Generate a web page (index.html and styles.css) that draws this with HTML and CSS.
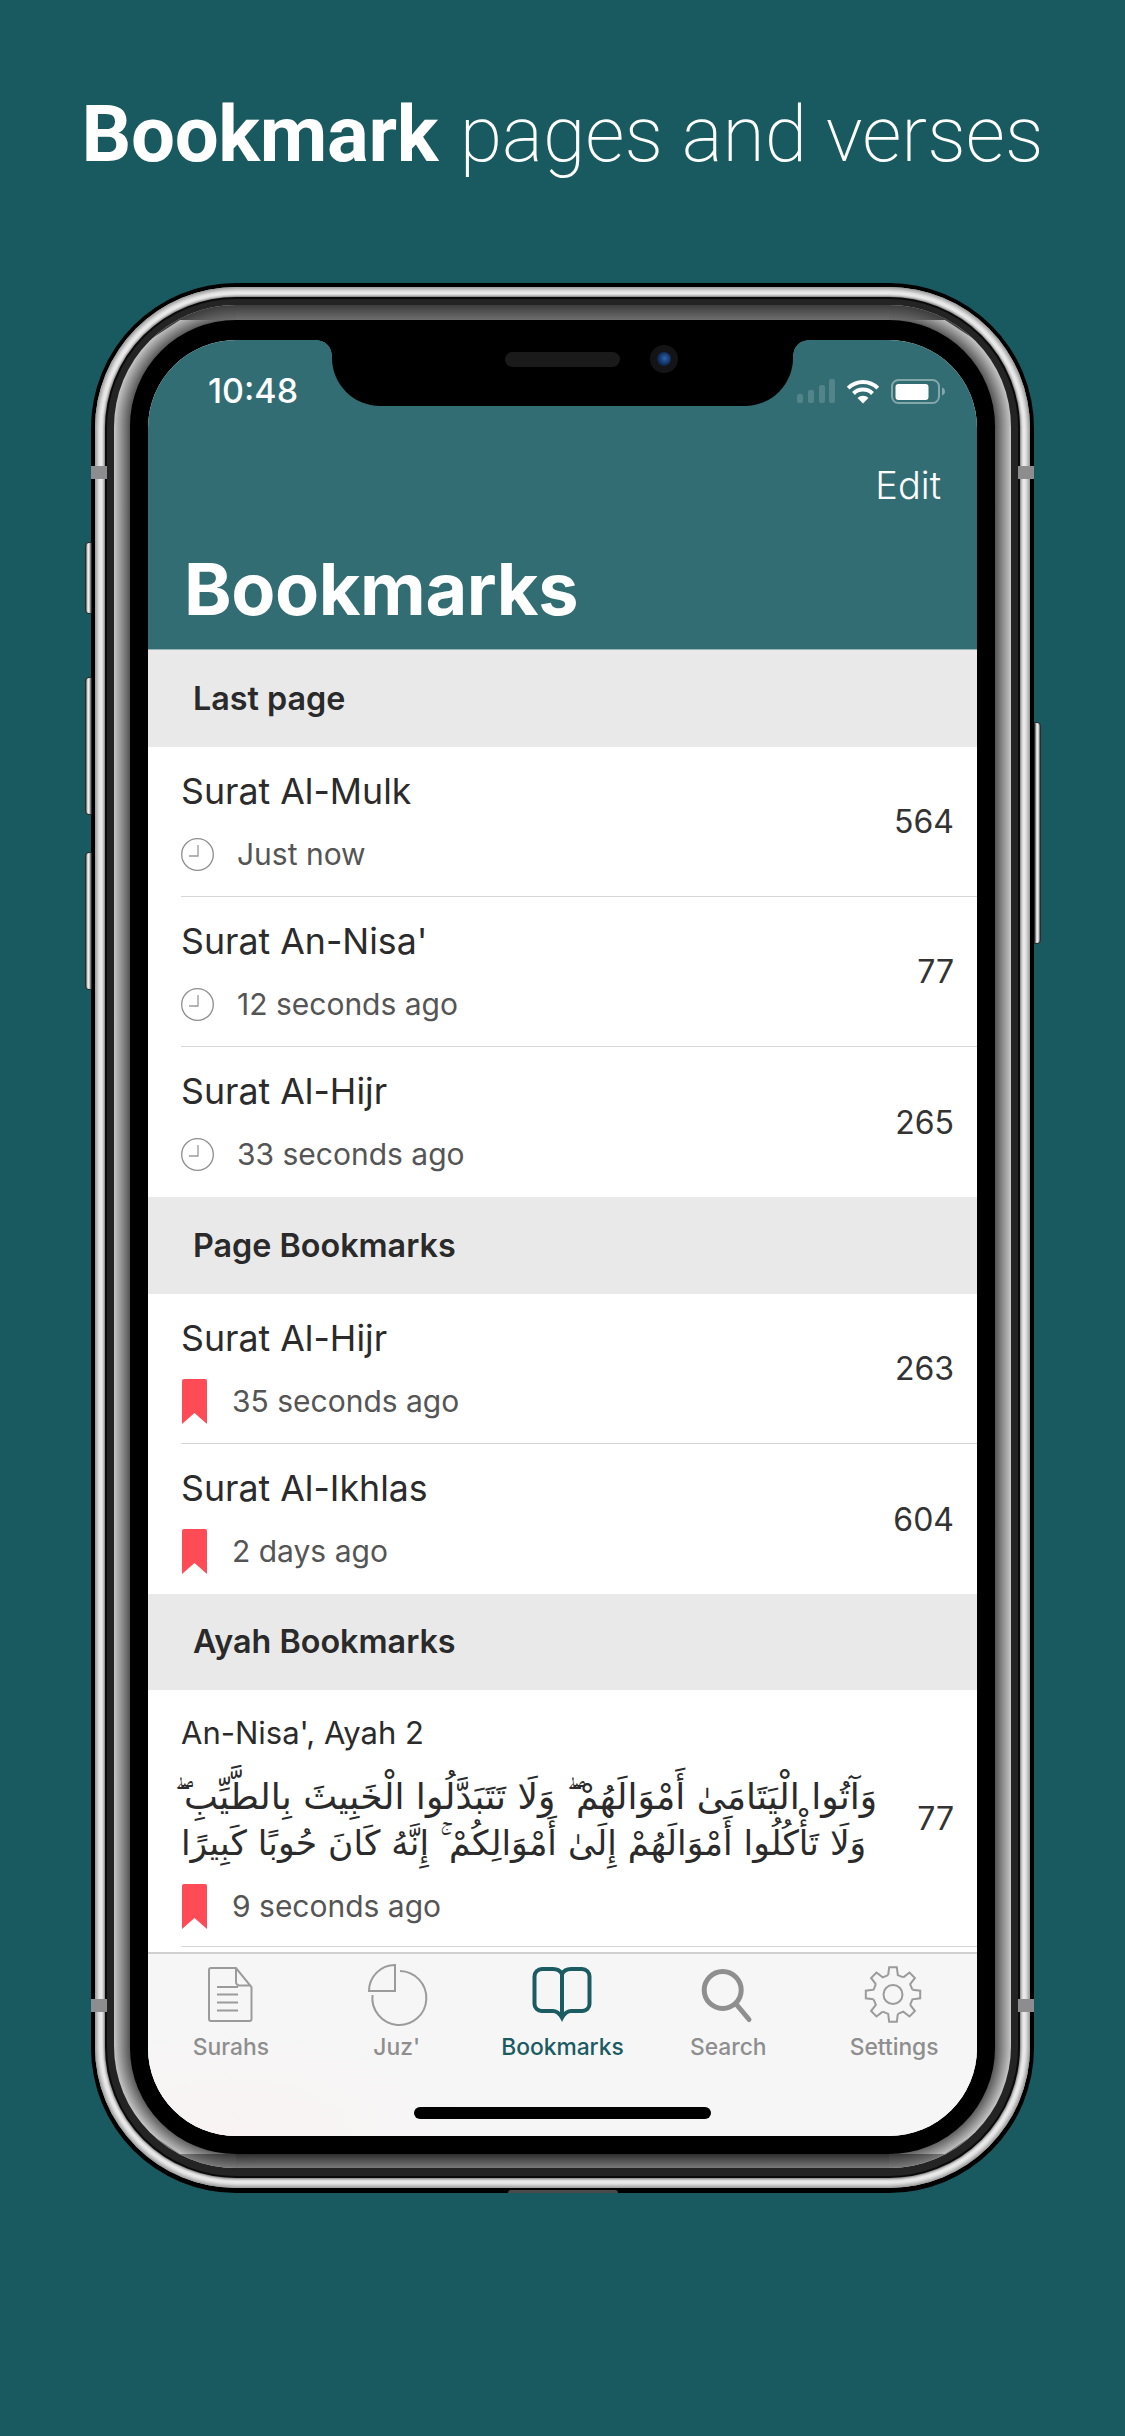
FILE: index.html
```html
<!DOCTYPE html>
<html lang="en">
<head>
<meta charset="utf-8">
<title>Bookmarks</title>
<link rel="stylesheet" href="styles.css">
</head>
<body>
<h1 class="headline"><b>Bookmark</b> <span>pages and verses</span></h1>
<div class="stage">
  <div class="phone">
    <i class="btn btn-mute"></i><i class="btn btn-up"></i><i class="btn btn-down"></i><i class="btn btn-power"></i>
    <i class="btn-bottom"></i>
    <i class="ant ant-tl"></i><i class="ant ant-tr"></i><i class="ant ant-bl"></i><i class="ant ant-br"></i>
    <div class="rim"><div class="band"><div class="bevel"><div class="bezel">
      <div class="screen">
        <div class="notch">
          <div class="speaker"></div>
          <div class="camera"><div class="lens"></div></div>
        </div>
        <header class="header">
          <div class="status">
            <span class="time">10:48</span>
            <div class="status-icons">
              <svg class="signal" width="38" height="25" viewBox="0 0 38 25"><rect x="0" y="15" width="6" height="9" rx="2"/><rect x="11" y="11" width="6" height="13" rx="2"/><rect x="22" y="6" width="6" height="18" rx="2"/><rect x="32" y="0" width="6" height="24" rx="2"/></svg>
              <svg class="wifi" width="34" height="25" viewBox="0 0 34 25"><path d="M2.2 9.2A21 21 0 0 1 31.8 9.2M7.5 14.5A13.5 13.5 0 0 1 26.5 14.5" fill="none" stroke="#fff" stroke-width="4"/><path d="M17 24.5L11.5 19A7.8 7.8 0 0 1 22.5 19Z" fill="#fff"/></svg>
              <svg class="battery" width="54" height="25" viewBox="0 0 54 25"><rect x="1" y="1" width="47" height="23" rx="6.5" fill="none" stroke="#fff" stroke-opacity=".4" stroke-width="2"/><rect x="4.500" y="5" width="33" height="16" rx="3" fill="#fff"/><path d="M51 8.500c1.800.6 3 2.200 3 4s-1.200 3.400-3 4z" fill="#fff" fill-opacity=".4"/></svg>
            </div>
          </div>
          <div class="nav"><span class="edit">Edit</span></div>
          <div class="large-title">Bookmarks</div>
        </header>

        <main class="list">
          <section class="section-head">Last page</section>
          <div class="row"><div class="row-main"><div class="row-title">Surat Al-Mulk</div><div class="row-sub"><svg class="clock" width="33" height="33" viewBox="0 0 33 33"><circle cx="16.500" cy="16.500" r="15.800"/><path d="M17 7V18H8"/></svg><span>Just now</span></div></div><div class="row-num">564</div></div>
          <div class="row"><div class="row-main"><div class="row-title">Surat An-Nisa'</div><div class="row-sub"><svg class="clock" width="33" height="33" viewBox="0 0 33 33"><circle cx="16.500" cy="16.500" r="15.800"/><path d="M17 7V18H8"/></svg><span>12 seconds ago</span></div></div><div class="row-num">77</div></div>
          <div class="row row-last"><div class="row-main"><div class="row-title">Surat Al-Hijr</div><div class="row-sub"><svg class="clock" width="33" height="33" viewBox="0 0 33 33"><circle cx="16.500" cy="16.500" r="15.800"/><path d="M17 7V18H8"/></svg><span>33 seconds ago</span></div></div><div class="row-num">265</div></div>

          <section class="section-head">Page Bookmarks</section>
          <div class="row"><div class="row-main"><div class="row-title">Surat Al-Hijr</div><div class="row-sub row-sub-mark"><svg class="mark" width="25" height="45" viewBox="0 0 25 45"><path d="M0 2a2 2 0 0 1 2-2H23a2 2 0 0 1 2 2V45L12.500 34 0 45Z"/></svg><span>35 seconds ago</span></div></div><div class="row-num">263</div></div>
          <div class="row row-last"><div class="row-main"><div class="row-title">Surat Al-Ikhlas</div><div class="row-sub row-sub-mark"><svg class="mark" width="25" height="45" viewBox="0 0 25 45"><path d="M0 2a2 2 0 0 1 2-2H23a2 2 0 0 1 2 2V45L12.500 34 0 45Z"/></svg><span>2 days ago</span></div></div><div class="row-num">604</div></div>

          <section class="section-head section-short">Ayah Bookmarks</section>
          <div class="row row-ayah"><div class="row-main"><div class="ayah-title">An-Nisa', Ayah 2</div>
            <div class="ayah-text" lang="ar">
              <div class="ayah-line ayah-line-a" dir="rtl">وَآتُوا الْيَتَامَىٰ أَمْوَالَهُمْ ۖ وَلَا تَتَبَدَّلُوا الْخَبِيثَ بِالطَّيِّبِ ۖ</div>
              <div class="ayah-line ayah-line-b" dir="rtl">وَلَا تَأْكُلُوا أَمْوَالَهُمْ إِلَىٰ أَمْوَالِكُمْ ۚ إِنَّهُ كَانَ حُوبًا كَبِيرًا</div>
            </div>
            <div class="row-sub row-sub-mark"><svg class="mark" width="25" height="45" viewBox="0 0 25 45"><path d="M0 2a2 2 0 0 1 2-2H23a2 2 0 0 1 2 2V45L12.500 34 0 45Z"/></svg><span>9 seconds ago</span></div></div><div class="row-num">77</div></div>
        </main>

        <nav class="tabbar">
          <div class="tab">
            <svg class="tab-icon" width="60" height="62" viewBox="0 0 60 62"><path d="M10 4H35L50.500 23V55a2 2 0 0 1-2 2H10a2 2 0 0 1-2-2V6a2 2 0 0 1 2-2ZM35 4V18a3.500 3.500 0 0 0 3.500 3.500H50M16 23H37M16 30.500H37M16 38.500H37M16 46.500H37"/></svg>
            <span>Surahs</span>
          </div>
          <div class="tab">
            <svg class="tab-icon" width="60" height="62" viewBox="0 0 60 62"><path d="M28 1V27H2A26 26 0 0 1 28 1ZM33 7A27 27 0 1 1 5.500 31"/></svg>
            <span>Juz'</span>
          </div>
          <div class="tab tab-active">
            <svg class="tab-icon" width="60" height="62" viewBox="0 0 60 62"><path d="M30 10C28 6 25 5 21 5H10A7.500 7.500 0 0 0 2.500 12.500V40A7 7 0 0 0 9.500 47H21C25 47 27 49 30 53C33 49 35 47 39 47H50.500A7 7 0 0 0 57.500 40V12.500A7.500 7.500 0 0 0 50 5H39C35 5 32 6 30 10ZM30 10V52"/><path class="tip" d="M25 48L30 58L35 48Z"/></svg>
            <span>Bookmarks</span>
          </div>
          <div class="tab">
            <svg class="tab-icon tab-search" width="60" height="62" viewBox="0 0 60 62"><circle cx="24.700" cy="26" r="18.500"/><path d="M38.500 40.500L51 55.500"/></svg>
            <span>Search</span>
          </div>
          <div class="tab">
            <svg class="tab-icon" width="60" height="62" viewBox="0 0 60 62"><defs><path id="tooth" d="M-4.840-19.400L-3.830-27.200H3.830L4.840-19.400L10.300-17.140"/></defs><g transform="translate(29 30.500)"><use href="#tooth"/><use href="#tooth" transform="rotate(45)"/><use href="#tooth" transform="rotate(90)"/><use href="#tooth" transform="rotate(135)"/><use href="#tooth" transform="rotate(180)"/><use href="#tooth" transform="rotate(225)"/><use href="#tooth" transform="rotate(270)"/><use href="#tooth" transform="rotate(315)"/><circle r="9.500"/></g></svg>
            <span>Settings</span>
          </div>
          <div class="home-indicator"></div>
        </nav>
      </div>
    </div></div></div></div>
  </div>
</div>
</body>
</html>
```

FILE: styles.css
```css
* { box-sizing: border-box; }
html, body { margin: 0; padding: 0; }
body {
  width: 1125px;
  height: 2436px;
  overflow: hidden;
  background: #195a60;
  font-family: Inter, "Liberation Sans", sans-serif;
}

.headline {
  margin: 0;
  padding: 97px 0 110px;
  font: 200 77px/76px Roboto, sans-serif;
  color: #fff;
  text-align: center;
  white-space: nowrap;
}
.headline b { font-weight: 700; font-size: 78px; letter-spacing: -.3px; }
.headline span { margin-left: 3px; }

.stage { display: flex; justify-content: center; }

/* ---------- device frame ---------- */
.phone {
  position: relative;
  width: 943px;
  padding: 4px 4px 5px;
  border-radius: 145px;
  background: #000;
}
.rim {
  padding: 10px;
  border-radius: 141px;
  background: #efefef;
  box-shadow: inset 0 0 4px 2px #8a8a8a;
}
.band {
  padding: 6px 7px 8px;
  border: 2px solid #0b0b0b;
  border-radius: 131px;
  background: #242424;
  box-shadow: 0 0 3px 1px rgba(70, 70, 70, .8);
}
.bevel {
  position: relative;
  padding: 15px 16px 14px;
  border-radius: 122px;
  background:
    radial-gradient(circle at 100% 100%, #555 106px, #c6c6c6 122px) 0 0 / 122px 122px no-repeat,
    radial-gradient(circle at 0 100%, #555 106px, #c6c6c6 122px) 100% 0 / 122px 122px no-repeat,
    radial-gradient(circle at 100% 0, #555 106px, #c6c6c6 122px) 0 100% / 122px 122px no-repeat,
    radial-gradient(circle at 0 0, #555 106px, #c6c6c6 122px) 100% 100% / 122px 122px no-repeat,
    linear-gradient(90deg, #c6c6c6, #555) 0 0 / 16px 100% no-repeat,
    linear-gradient(270deg, #c6c6c6, #555) 100% 0 / 16px 100% no-repeat;
}
.bevel::before,
.bevel::after {
  content: "";
  position: absolute;
  inset: 0;
  border-radius: inherit;
}
.bevel::before {
  background:
    radial-gradient(circle at 100% 100%, #6e6e6e 106px, #3c3c3c 122px) 0 0 / 122px 122px no-repeat,
    radial-gradient(circle at 0 100%, #6e6e6e 106px, #3c3c3c 122px) 100% 0 / 122px 122px no-repeat,
    linear-gradient(180deg, #3c3c3c, #6e6e6e) 0 0 / 100% 15px no-repeat;
  clip-path: polygon(0 0, 100% 0, 100% 45px, calc(100% - 20px) 45px, calc(100% - 66px) 15px, 66px 15px, 20px 45px, 0 45px);
}
.bevel::after {
  background:
    radial-gradient(circle at 100% 0, #2e2e2e 106px, #7a7a7a 122px) 0 100% / 122px 122px no-repeat,
    radial-gradient(circle at 0 0, #2e2e2e 106px, #7a7a7a 122px) 100% 100% / 122px 122px no-repeat,
    linear-gradient(0deg, #7a7a7a, #2e2e2e) 0 100% / 100% 14px no-repeat;
  clip-path: polygon(0 100%, 100% 100%, 100% calc(100% - 45px), calc(100% - 20px) calc(100% - 45px), calc(100% - 66px) calc(100% - 14px), 66px calc(100% - 14px), 20px calc(100% - 45px), 0 calc(100% - 45px));
}
.bezel {
  position: relative;
  z-index: 1;
  padding: 20px 18px 18px;
  border-radius: 106px;
  background: #000;
}

.btn {
  position: absolute;
  width: 7px;
  background: linear-gradient(90deg, #555, #e6e6e6 35%, #f0f0f0 60%, #555);
  border: 1px solid #2c2c2c;
}
.btn-mute, .btn-up, .btn-down { left: -6px; border-radius: 4px 0 0 4px; }
.btn-mute { top: 259px; height: 72px; }
.btn-up { top: 394px; height: 138px; }
.btn-down { top: 569px; height: 138px; }
.btn-power { right: -7px; top: 439px; height: 222px; border-radius: 0 4px 4px 0; }
.btn-bottom {
  position: absolute;
  left: 417px;
  bottom: 0;
  width: 110px;
  height: 3px;
  background: #4a4a4a;
  border-radius: 4px 4px 0 0;
  z-index: 2;
}
.ant {
  position: absolute;
  z-index: 2;
  width: 16px;
  height: 13px;
  background: #8d8d8f;
}
.ant-tl { left: 0; top: 183px; }
.ant-tr { right: 0; top: 183px; }
.ant-bl { left: 0; top: 1716px; }
.ant-br { right: 0; top: 1716px; }

/* ---------- screen ---------- */
.screen {
  position: relative;
  display: flex;
  flex-direction: column;
  height: 1796px;
  border-radius: 88px;
  overflow: hidden;
  background: #fff;
}
.notch {
  position: absolute;
  z-index: 3;
  top: 0;
  left: 184px;
  width: 461px;
  height: 66px;
  background: #000;
  border-radius: 0 0 48px 48px;
}
.notch::before,
.notch::after {
  content: "";
  position: absolute;
  top: 0;
  width: 15px;
  height: 15px;
}
.notch::before { left: -15px; background: radial-gradient(circle at 0 100%, transparent 14.500px, #000 15px); }
.notch::after { right: -15px; background: radial-gradient(circle at 100% 100%, transparent 14.500px, #000 15px); }
.speaker {
  position: absolute;
  left: 173px;
  top: 12px;
  width: 115px;
  height: 15px;
  border-radius: 8px;
  background: #1a1a1a;
}
.camera {
  position: absolute;
  left: 318px;
  top: 5px;
  width: 28px;
  height: 28px;
  padding: 7px;
  border-radius: 50%;
  background: #141416;
}
.lens {
  width: 14px;
  height: 14px;
  border-radius: 50%;
  background: radial-gradient(circle at 55% 45%, #2a64b0, #0f2a55 60%, #0a1424);
}

.header {
  flex: none;
  height: 310px;
  background: #336d74;
  border-bottom: 1px solid #97b3b6;
  color: #fff;
}
.status {
  display: flex;
  align-items: center;
  justify-content: space-between;
  height: 102px;
  padding: 0 32px 0 60px;
}
.time { font-size: 34px; font-weight: 500; line-height: 1; }
.status-icons { display: flex; align-items: center; gap: 11px; }
.signal rect { fill: #fff; fill-opacity: .16; }
.nav {
  display: flex;
  justify-content: flex-end;
  height: 86px;
  padding-right: 36px;
  line-height: 86px;
}
.edit { font-size: 38px; font-weight: 300; }
.large-title {
  padding-left: 36px;
  font-size: 72px;
  font-weight: 700;
  line-height: 121px;
  letter-spacing: -.4px;
}

.list {
  flex: 1;
  min-height: 0;
  overflow: hidden;
  background: #fff;
}
.section-head {
  height: 97px;
  padding-left: 45px;
  background: #e9e9e9;
  color: #2a2a2a;
  font-size: 32.300px;
  font-weight: 600;
  line-height: 97px;
}
.section-short { height: 96px; line-height: 96px; }
.row {
  display: flex;
  align-items: center;
  height: 150px;
  margin-left: 33px;
  padding-right: 23px;
  border-bottom: 1px solid #d6d6d8;
}
.row-last { border-bottom: 0; }
.row-main { flex: 1; min-width: 0; align-self: flex-start; }
.row-title {
  padding-top: 22px;
  color: #2b2b2b;
  font-size: 35.700px;
  line-height: 44px;
}
.row-sub {
  display: flex;
  align-items: center;
  height: 40px;
  margin-top: 21px;
  gap: 23px;
  color: #555;
  font-size: 30px;
}
.row-sub-mark { gap: 25px; margin-left: 1px; }
.row-num {
  color: #333;
  font-size: 32px;
}
.clock { flex: none; }
.clock circle { fill: none; stroke: #8d8d8d; stroke-width: 1.300; }
.clock path { fill: none; stroke: #9a9a9a; stroke-width: 1.300; }
.mark { flex: none; }
.mark path { fill: #ff4b55; }

.row-ayah { height: 257px; }
.ayah-title {
  padding-top: 22px;
  color: #2b2b2b;
  font-size: 31px;
  line-height: 42px;
}
.ayah-text {
  margin-top: 20px;
  margin-left: -6px;
  font-family: "DejaVu Sans", sans-serif;
  color: #2b2b2b;
  line-height: 46px;
  white-space: nowrap;
}
.ayah-line { width: max-content; }
.ayah-line-a { font-size: 36px; }
.ayah-line-b { font-size: 34.500px; margin-left: 6px; }
.row-ayah .row-sub { margin-top: 20px; }

.tabbar {
  position: relative;
  flex: none;
  display: grid;
  grid-template-columns: repeat(5, 1fr);
  height: 184px;
  padding-top: 10px;
  border-top: 2px solid #d0d0d0;
  background:
    radial-gradient(ellipse 260px 120px at 10% 100%, #f9f3f3, rgba(249, 243, 243, 0)),
    #f6f6f6;
}
.tab {
  display: flex;
  flex-direction: column;
  align-items: center;
  color: #8e8e8e;
  font-size: 22.800px;
  font-weight: 500;
  line-height: 24px;
}
.tab span { margin-top: 9px; }
.tab-icon { display: block; overflow: visible; fill: none; stroke: #9b9b9b; stroke-width: 2; }
.tab-search { stroke: #8f8f8f; stroke-width: 5; stroke-linecap: round; }
.tab-active { color: #1b5b62; }
.tab-active .tab-icon { stroke: #1b5b62; stroke-width: 4; }
.tab-active .tip { fill: #1b5b62; stroke: none; }
.home-indicator {
  position: absolute;
  left: 266px;
  bottom: 17px;
  width: 297px;
  height: 12px;
  border-radius: 6px;
  background: #000;
}
```
